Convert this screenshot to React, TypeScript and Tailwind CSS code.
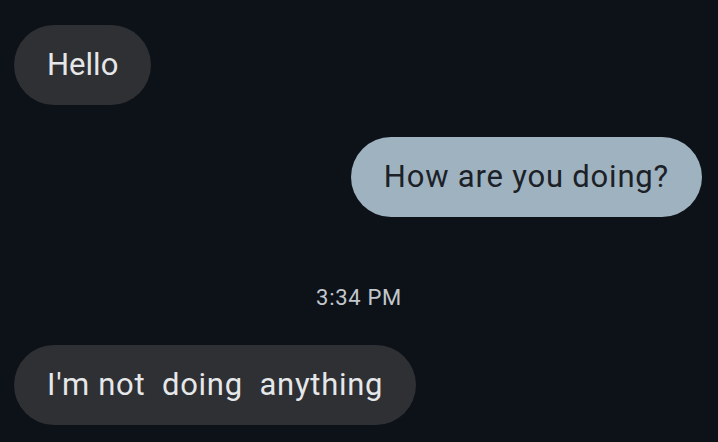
import React from 'react';

const font = { fontFamily: 'Roboto, "Noto Sans", sans-serif' };

const Incoming: React.FC<{ text: string; tight?: boolean }> = ({ text, tight }) => (
  <div
    className={`self-start h-[80px] px-[33px] flex items-center rounded-full bg-[#2e3034] text-[#e6e7e9] text-[31px] whitespace-pre ${
      tight ? 'tracking-normal' : 'tracking-[0.7px]'
    }`}
  >
    {text}
  </div>
);

const Outgoing: React.FC<{ text: string }> = ({ text }) => (
  <div className="self-end h-[80px] px-[33px] flex items-center rounded-full bg-[#9fb2c0] text-[#1b2127] text-[31px] tracking-[0.8px] whitespace-pre">
    {text}
  </div>
);

export default function App() {
  return (
    <div
      className="w-[718px] h-[442px] overflow-hidden bg-[#0d1219] flex flex-col pt-[25px] pl-[14px] pr-[16px]"
      style={font}
    >
      <Incoming text="Hello" tight />
      <div className="mt-[32px] flex justify-end">
        <Outgoing text="How are you doing?" />
      </div>
      <div className="mt-[66px] text-center text-[22px] tracking-[0.7px] leading-[30px] text-[#c3c7cc] pl-[2px]">3:34 PM</div>
      <div className="mt-[32px] flex">
        <Incoming text="I'm not  doing  anything" />
      </div>
    </div>
  );
}
